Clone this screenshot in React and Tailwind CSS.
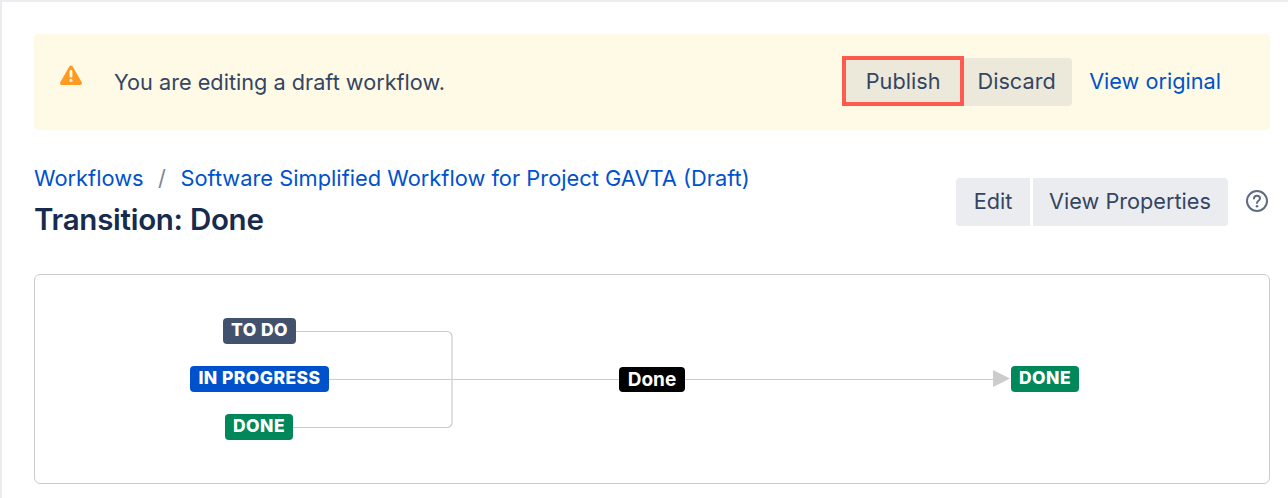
import React from 'react';

const Lozenge = ({ children, className }) => (
  <span className={`absolute flex h-[26px] items-center justify-center rounded-[4px] pb-[2.5px] text-[17.5px] font-extrabold tracking-[0.45px] text-white ${className}`}>
    {children}
  </span>
);

const WarningIcon = () => (
  <svg width="24" height="24" viewBox="0 0 24 24" className="block">
    <path
      fill="#ff991f"
      fillRule="evenodd"
      d="M10.3 3.6c.8-1.4 2.6-1.4 3.4 0l9 15.6c.7 1.3-.2 2.8-1.7 2.8H3c-1.5 0-2.4-1.5-1.7-2.8l9-15.6z"
    />
    <rect x="10.6" y="7" width="2.8" height="7.6" rx="1.4" fill="#fffae6" />
    <circle cx="12" cy="17.4" r="1.6" fill="#fffae6" />
  </svg>
);

const HelpIcon = () => (
  <svg width="24" height="24" viewBox="0 0 24 24" fill="none" className="block">
    <circle cx="12" cy="12" r="10" stroke="#5e6c84" strokeWidth="2" />
    <path d="M9 9.6c0-1.7 1.3-2.8 3-2.8s3 1.1 3 2.7c0 2.3-3 2.3-3 4.5" stroke="#5e6c84" strokeWidth="2" strokeLinecap="round" />
    <circle cx="12" cy="17.2" r="1.3" fill="#5e6c84" />
  </svg>
);

export default function App() {
  return (
    <div className="h-[498px] w-[1288px] overflow-hidden border-t-2 border-l-2 border-[#ebecf0] bg-white pt-[32px] pr-[18px] pl-[32px] font-['Inter',sans-serif] text-[#344563]">
      <div className="flex h-[96px] items-center rounded-[4px] bg-[#fffae6] pr-[49px] pl-[25px]">
        <div className="mb-[14px] w-[55px]">
          <WarningIcon />
        </div>
        <p className="flex-1 text-[21.7px]">You are editing a draft workflow.</p>
        <div className="mb-[2px] flex items-end">
          <button className="h-[50px] w-[122px] border-[4.5px] border-[#ff5a4f] bg-[#ede9da] text-[21.7px]">
            Publish
          </button>
          <button className="h-[48px] w-[108px] rounded-r-[4px] bg-[#ede9da] pr-[3px] pb-[2px] text-[21.7px]">Discard</button>
          <a className="ml-[17px] self-center text-[21.7px] text-[#0052cc]">View original</a>
        </div>
      </div>

      <div className="mt-[32px] flex items-center justify-between">
        <div className="pb-[5px]">
          <div className="flex h-[32px] items-center text-[21.85px] text-[#0052cc]">
            <a>Workflows</a>
            <span className="mx-[14.5px] text-[#7a869a]">/</span>
            <a>Software Simplified Workflow for Project GAVTA (Draft)</a>
          </div>
          <h1 className="mt-[7px] text-[29.5px] leading-[36px] font-semibold tracking-[-0.27px] text-[#172b4d]">Transition: Done</h1>
        </div>
        <div className="flex items-center">
          <button className="h-[48px] w-[74px] rounded-l-[4px] bg-[#ebecf0] pb-[2px] text-[21.7px]">Edit</button>
          <button className="ml-[3px] h-[48px] w-[195px] rounded-r-[4px] bg-[#ebecf0] pr-[1px] pb-[2px] text-[21.7px]">View Properties</button>
          <div className="mr-[1px] mb-[2px] ml-[17px] w-[24px]">
            <HelpIcon />
          </div>
        </div>
      </div>

      <div className="relative mt-[32px] h-[210px] rounded-[6px] border border-[#cccccc]">
        <svg width="1234" height="208" className="absolute top-0 left-0" fill="none">
          <path d="M261 56.5H412a5 5 0 0 1 5 5V147.5a5 5 0 0 1-5 5H258" stroke="#cccccc" strokeWidth="1.2" />
          <path d="M294 104.5H960" stroke="#cccccc" strokeWidth="1.2" />
          <path d="M958 95L975 103.5L958 112Z" fill="#cccccc" />
        </svg>
        <Lozenge className="top-[43px] left-[188px] w-[73px] bg-[#42526e]">TO DO</Lozenge>
        <Lozenge className="top-[91px] left-[155px] w-[139px] bg-[#0052cc]">IN PROGRESS</Lozenge>
        <Lozenge className="top-[139px] left-[190px] w-[68px] bg-[#00875a]">DONE</Lozenge>
        <span className="absolute top-[92px] left-[584px] flex h-[25px] w-[66px] items-center justify-center rounded-[4px] bg-black pt-[2px] text-[19px] font-bold text-white">
          Done
        </span>
        <Lozenge className="top-[91px] left-[976px] w-[68px] bg-[#00875a]">DONE</Lozenge>
      </div>
    </div>
  );
}
